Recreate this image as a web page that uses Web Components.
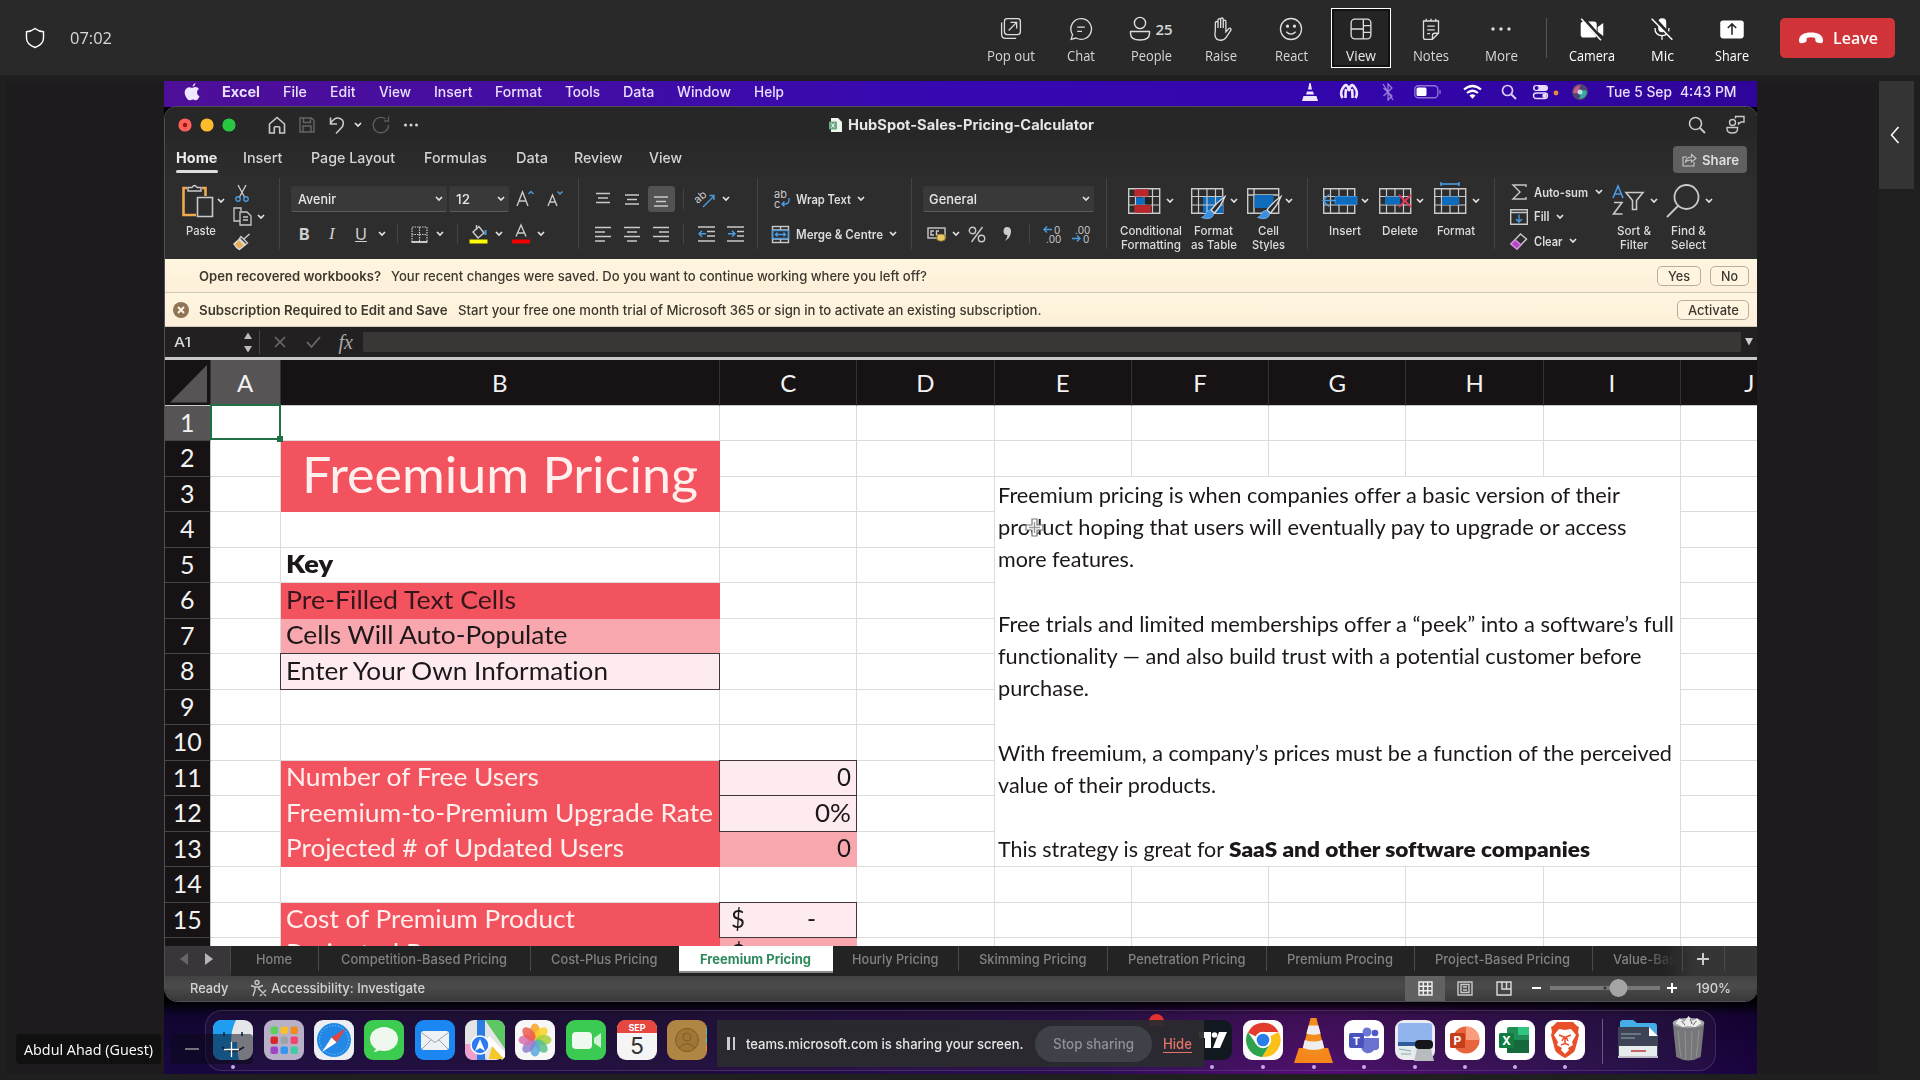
<!DOCTYPE html>
<html lang="en">
<head>
<meta charset="utf-8">
<title>Meeting</title>
<style>
html,body{margin:0;width:1920px;height:1080px;overflow:hidden;background:#1f1f1f;font-family:Inter,"Liberation Sans",sans-serif}
</style>
</head>
<body>
<meeting-app></meeting-app>
<script>
const BASE = `:host,*{box-sizing:border-box}svg{display:block;overflow:visible;flex:none}
.row{display:flex;align-items:center}.row>span{flex:none;display:flex;align-items:center}`;

function define(name, css, html) {
  customElements.define(name, class extends HTMLElement {
    constructor() { super(); this.attachShadow({ mode: 'open' }); }
    connectedCallback() {
      if (this.shadowRoot.firstChild) return;
      const t = document.createElement('template');
      t.innerHTML = `<style>${BASE}${css}</style>${typeof html === 'function' ? html(this) : html}`;
      this.shadowRoot.append(document.importNode(t.content, true));
    }
  });
}

/* Text set to an exact advance width */
customElements.define('fit-text', class extends HTMLElement {
  connectedCallback() {
    if (!this.shadowRoot) {
      this.attachShadow({ mode: 'open' }).innerHTML =
        '<style>:host{display:block;white-space:pre;flex:none}span{display:inline-block;transform-origin:0 50%}</style><span><slot></slot></span>';
    }
    const w = +this.getAttribute('w'), s = this.shadowRoot.querySelector('span');
    this.style.width = w + 'px';
    const n = s.getBoundingClientRect().width;
    if (n) s.style.transform = `scaleX(${w / n})`;
  }
});

/* Row of items [x, width, html], spaced by margins */
const row = (x0, items, style = '') => {
  let cur = x0;
  return `<div class="row" style="${style}">` + items.map(([x, w, h]) => {
    const m = x - cur; cur = x + w;
    return `<span style="margin-left:${m.toFixed(1)}px;width:${w}px">${h}</span>`;
  }).join('') + '</div>';
};
const T = (a, b, text, size, weight = 500, color = '', extra = '') =>
  [a, +(b - a).toFixed(1), `<fit-text w="${(b - a).toFixed(1)}" style="font-size:${size}px;font-weight:${weight};${color ? 'color:' + color + ';' : ''}${extra}">${text}</fit-text>`];
const svg = (w, h, body, attrs = '') => `<svg width="${w}" height="${h}" viewBox="0 0 ${w} ${h}" fill="none" stroke="#c9c9c9" stroke-width="1.4" ${attrs}>${body}</svg>`;
const I = (cx, w, h, body, attrs) => [cx - w / 2, w, svg(w, h, body, attrs)];
const CH = cx => I(cx, 8, 6, '<path d="M1 1l3 3 3-3" stroke="#e2e2e2" stroke-width="1.7"/>');
const SEP = (x, h) => [x, 1, `<i style="width:1px;height:${h}px;background:#444"></i>`];

/* ---------- Meeting header ---------- */
const hi = {
  pop: '<rect x="6" y="2" width="17" height="17" rx="3"/><path d="M3 6v12.500q0 4.500 4.500 4.500h11M10.500 14.500l8-8M12.500 6h6.500v6.500"/>',
  chat: '<path d="M13 2a11 11 0 1 1-5.200 20.600L2.500 24l1.500-5A11 11 0 0 1 13 2zM9 11h8M9 15.500h5"/>',
  raise: '<path d="M7 14V6.500q0-1.500 1.400-1.500t1.400 1.500V12V3.500Q9.800 2 11.200 2t1.400 1.500V12V3Q12.600 1.300 14 1.300T15.400 3v9V5q0-1.400 1.400-1.400T18.200 5v11l3.200-3.400q1.200-1 2.100.2.500.800-.1 1.700L18.500 22q-2 3-6 3Q7 25 6.500 19z"/>',
  react: '<circle cx="13" cy="13" r="11.200"/><path d="M8 16q5 5 10 0"/><circle cx="9.300" cy="10" r="1" fill="#ddd"/><circle cx="16.700" cy="10" r="1" fill="#ddd"/>',
  view: '<rect x="2.500" y="2.500" width="21" height="21" rx="4"/><path d="M15.500 2.500v21M2.500 13h13M15.500 9.500h8M15.500 16.500h8"/>',
  notes: '<path d="M5 4.500h16v13l-6.500 6.500H7q-2 0-2-2zM21 17.500h-4q-2.500 0-2.500 2.500v4M8 2v3M13 2v3M18 2v3M9 10h8M9 14h8M9 18h3"/>',
  more: '<g fill="#ddd" stroke="none"><circle cx="4.500" cy="13" r="1.800"/><circle cx="13" cy="13" r="1.800"/><circle cx="21.500" cy="13" r="1.800"/></g>',
  camera: '<g stroke="none" fill="#fff"><rect x="1" y="5" width="17" height="17" rx="3"/><path d="M19 11l6-4.500v14L19 16z"/></g><path d="M3 1l21 24" stroke="#292929" stroke-width="4"/><path d="M1.500 2l21 23" stroke="#fff" stroke-width="1.600"/>',
  mic: '<rect x="9" y="1.500" width="8.500" height="15" rx="4.200" fill="#fff" stroke="none"/><path d="M5.500 12q0 8 7.500 8t7.500-8M13 20v4.500" stroke="#fff"/><path d="M4 1l21 23" stroke="#292929" stroke-width="4"/><path d="M2 2l22 22.500" stroke="#fff" stroke-width="1.600"/>',
  share: '<rect x=".5" y="4" width="25" height="19" rx="3" fill="#fff" stroke="none"/><path d="M13 19V8M8.500 12L13 7.500l4.500 4.500" stroke="#292929" stroke-width="1.700"/>'
};
define('meet-button', `:host{display:flex;flex-direction:column;align-items:center;width:60px;height:60px;margin:0 5px;padding-top:7px;border:1px solid transparent;color:#d6d6d6;font-family:"Open Sans",sans-serif}
:host([active]){border-color:#fff;background:#242424;box-shadow:inset 0 0 0 2px #111;color:#e8e8e8}:host([strong]){color:#fff}
.l{height:20px;line-height:20px;margin-top:4px}.i{display:flex;align-items:center;height:26px;gap:3px}b{font-size:15px;font-weight:600}`,
  e => {
    const ic = e.getAttribute('icon');
    const g = ic === 'people'
      ? svg(23, 26, '<circle cx="11" cy="7" r="5.600"/><path d="M1.500 15.500h19v2q0 6.500-9.500 6.500T1.500 17.500z" stroke-linejoin="round"/>', 'style="stroke:#ddd"') + '<b>25</b>'
      : svg(26, 26, hi[ic], 'style="stroke:#ddd;transform:scale(.94)"');
    return `<div class="i">${g}</div><fit-text class="l" w="${e.getAttribute('w')}" style="font-size:14px">${e.getAttribute('label')}</fit-text>`;
  });
define('meet-header', `:host{display:flex;align-items:center;height:75px;background:#292929;padding:0 25px}
.time{font-family:"Open Sans",sans-serif;color:#d9d9d9;margin-left:25px;margin-right:auto}
.v{width:1px;height:40px;background:#555;margin:0 10px}
.leave{display:flex;align-items:center;gap:9px;width:115px;height:40px;background:#d13438;border-radius:5px;color:#fff;margin-left:13px;padding-left:18px;font-family:"Open Sans",sans-serif}
nav{display:flex;align-items:center;padding-top:1px}`,
  `${svg(20, 22, '<path d="M10 1.500q4 3.200 8.500 3.200V11q0 6.500-8.500 9.500Q1.500 17.500 1.500 11V4.700Q6 4.700 10 1.500z" stroke="#fff"/>')}
  <fit-text class="time" w="42" style="font-size:15.500px">07:02</fit-text>
  <nav><meet-button icon="pop" label="Pop out" w="48"></meet-button><meet-button icon="chat" label="Chat" w="28"></meet-button><meet-button icon="people" label="People" w="41"></meet-button><meet-button icon="raise" label="Raise" w="32"></meet-button><meet-button icon="react" label="React" w="33"></meet-button><meet-button icon="view" label="View" w="30" active></meet-button><meet-button icon="notes" label="Notes" w="36"></meet-button><meet-button icon="more" label="More" w="33"></meet-button>
  <i class="v"></i><meet-button icon="camera" label="Camera" w="46" strong></meet-button><meet-button icon="mic" label="Mic" w="23" strong></meet-button><meet-button icon="share" label="Share" w="34" strong></meet-button></nav>
  <div class="leave">${svg(26, 14, '<path d="M1 9.500C1 4 6 1.500 13 1.500S25 4 25 9.500q0 3-2.500 2.700l-3.500-.8q-1.500-.4-1.600-2L17.200 7Q13 5.500 8.800 7l-.2 2.400q-.1 1.600-1.600 2l-3.500.8Q1 12.500 1 9.500z" fill="#fff" stroke="none"/>')}<fit-text w="45" style="font-size:16.500px;font-weight:600">Leave</fit-text></div>`);

/* ---------- macOS menu bar ---------- */
const W = '#e9dffb', menu = (a, b, s, w = 500) => T(a, b, s, 14, w, W);
define('mac-menubar', `:host{display:block;height:26px;background:linear-gradient(90deg,#4e0f98,#430da4 25%,#3508b2 50%,#3306ab 75%,#2f0499)}`,
  row(164, [
    I(192, 16, 18, '<path d="M11.500 0q.2 2.300-2.800 3.900Q8.300 1.500 11.500 0zM8.200 5Q9.800 4 11.500 4q2.200.1 3.500 2-2.200 1.400-2 3.700.3 2.600 2.500 3.500-1.700 4-3.500 4-1 0-2-.5t-2.200 0Q4.400 18.400 2.200 14.500-.5 9.500 1.500 6.500 4 3 8.200 5z" fill="#efe6ff" stroke="none"/>'),
    menu(222, 260, 'Excel', 700), menu(283, 307, 'File'), menu(330, 355.5, 'Edit'), menu(379, 411, 'View'), menu(433.5, 472, 'Insert'), menu(495, 542, 'Format'), menu(565, 600, 'Tools'), menu(623, 654.5, 'Data'), menu(677, 731, 'Window'), menu(754, 784, 'Help'),
    I(1309.5, 18, 20, '<path d="M1 19l1.500-5h13l1.500 5zM5 12.500L6 9.500h6l1 3zM7 7.500L8.400 1h1.200L11 7.500z" fill="#eee6ff" stroke="none"/>'),
    I(1349, 20, 18, '<path d="M3.500 15Q1 10.500 3 6.500T7 2q2 .5 3 6 1-5.500 3-6 2 .5 4 4.500T16.500 15M6.500 15Q6.500 9 7 6M13.500 15Q13.500 9 13 6" stroke="#efe6ff" stroke-width="2.600"/>'),
    I(1388, 12, 18, '<path d="M1.500 5l8.500 8-4 4V1l4 4-8.500 8M1 1l10 16" stroke="#9d7fd8" stroke-width="1.200"/>'),
    I(1428, 28, 14, '<rect x=".8" y=".8" width="23" height="12" rx="3.500" stroke="#8d70d0"/><rect x="2.500" y="2.500" width="10" height="8.600" rx="1.500" fill="#fff" stroke="none"/><path d="M26 5v4" stroke="#8d70d0"/>'),
    I(1472, 19, 14, '<path d="M1 4.500q8.500-7 17 0M4 8q5.500-4.500 11 0" stroke="#fff" stroke-width="2.200"/><path d="M6.500 10.500q3-2.500 6 0l-3 3.300z" fill="#fff" stroke="none"/>'),
    I(1509, 16, 16, '<circle cx="6.500" cy="6.500" r="5" stroke="#d9cdf6" stroke-width="1.700"/><path d="M10 10l5 5" stroke="#d9cdf6" stroke-width="1.900"/>'),
    I(1540, 17, 16, '<rect x="1" y="1" width="15" height="6" rx="3" fill="#e6dcfa" stroke="none"/><circle cx="4.500" cy="4" r="2" fill="#3306ab" stroke="none"/><rect x="1.500" y="9" width="14" height="5.500" rx="2.700" stroke="#e6dcfa"/><circle cx="12.500" cy="11.700" r="2.200" fill="#e6dcfa" stroke="none"/>'),
    I(1556, 6, 6, '<circle cx="3" cy="4" r="2.400" fill="#e88b3a" stroke="none"/>'),
    I(1580, 16, 16, '<circle cx="8" cy="8" r="8" fill="#4d4470" stroke="none"/><path d="M1 9Q2 1 9 1 6 4 8 8q-3 2-7 1z" fill="#c35b8f" stroke="none"/><path d="M8 8q5-4 7 0-1 7-8 7 2-3 1-7z" fill="#38a9a5" stroke="none"/><circle cx="8" cy="8" r="2.500" fill="#bdd" stroke="none"/>'),
    T(1605.500, 1671.500, 'Tue 5 Sep', 14, 500, W), T(1680, 1736.500, '4:43 PM', 14, 500, W)
  ], 'height:21px'));

/* ---------- Excel chrome ---------- */
define('excel-titlebar', `:host{display:block;height:35px;background:#272728}`,
  row(165, [
    I(184.5, 14, 14, '<circle cx="7" cy="7" r="6.600" fill="#ff5f57" stroke="none"/><circle cx="7" cy="7" r="2.200" fill="#8c1a14" stroke="none"/>'),
    I(206.5, 14, 14, '<circle cx="7" cy="7" r="6.600" fill="#fdbc2e" stroke="none"/>'),
    I(228.700, 14, 14, '<circle cx="7" cy="7" r="6.600" fill="#28c840" stroke="none"/>'),
    I(277, 18, 18, '<path d="M1.500 8L9 1.500 16.500 8v9h-4.800v-5.500q0-.8-.8-.8H7.100q-.8 0-.8.800V17H1.500z" stroke-width="1.600"/>'),
    I(307.5, 16, 16, '<path d="M1 1h11.500L15 3.500V15H1zM4.500 1v4.500h7V1M4 15V9h8v6" stroke="#666"/>'),
    I(337.500, 16, 18, '<path d="M1.500 1.500V8H8M1.500 7.500Q6 .5 11 2.500t2.500 8L7 17.500" stroke-width="1.600"/>'), CH(358),
    I(381, 18, 18, '<path d="M16.500 9a7.700 7.700 0 1 1-3-6M16.500 .5v4.500h-4.500" stroke="#5c5c5c"/>'),
    I(411, 16, 4, '<g fill="#d5d5d5" stroke="none"><circle cx="2.500" cy="2" r="1.500"/><circle cx="8" cy="2" r="1.500"/><circle cx="13.500" cy="2" r="1.500"/></g>'),
    I(836, 14, 16, '<path d="M2 1h7l4 4v10H2z" fill="#eef5ef" stroke="none"/><rect x="0" y="4.500" width="8" height="8" rx="1" fill="#6da885" stroke="none"/><path d="M2.500 6.500l3 4M5.500 6.500l-3 4" stroke="#fff" stroke-width="1"/>'),
    T(848, 1094, 'HubSpot-Sales-Pricing-Calculator', 14, 700, '#e6e6e6'),
    I(1697.5, 18, 18, '<circle cx="7.500" cy="7.500" r="6" stroke-width="1.600"/><path d="M12 12l5 5" stroke-width="1.800"/>'),
    I(1735, 20, 19, '<circle cx="7.500" cy="7.500" r="3"/><path d="M2 12.500h10.500v1.500q0 4-5.200 4T2 14zM10.500 3.500V1.500H19V7h-3l-2.500 2V7" />')
  ], 'height:35px'));

const tab = (a, b, s, w = 500) => T(a, b, s, 14.5, w, '#d4d4d4');
define('excel-tabs', `:host{display:block;height:34px;background:linear-gradient(#29292a,#2c2c2d)}
.home{display:flex;flex-direction:column;align-items:flex-start;padding-top:6.600px;line-height:18px}.home i{width:41.500px;height:3.600px;border-radius:2px;background:#dedede;margin-top:3px}
.share{display:flex;align-items:center;gap:5px;width:74px;height:27px;background:#606061;border-radius:4px;padding-left:9px;margin-top:4px}`,
  row(165, [
    [176, 41.5, `<div class="home">${T(0, 41.5, 'Home', 14.5, 700, '#ececec')[2]}<i></i></div>`],
    tab(243, 282.5, 'Insert'), tab(311, 395, 'Page Layout'), tab(424, 487, 'Formulas'), tab(515.5, 547.5, 'Data'), tab(573.500, 622, 'Review'), tab(649, 682, 'View'),
    [1672.700, 74, `<div class="share">${svg(15, 14, '<path d="M5 4H1v9h11V9M3.500 9Q4 4.500 9.500 4V1.500L14 5.500 9.500 9V7Q5.500 6.800 3.500 9z" stroke-width="1.100"/>')}${T(0, 37, 'Share', 13.5, 600, '#dedede')[2]}</div>`]
  ], 'height:31.500px'));

const lines = (ys, xs) => ys.map((y, i) => `<path d="M${xs[i][0]} ${y}h${xs[i][1]}"/>`).join('');
const A3 = [[1, 14], [3, 10], [1, 14]];
const grid = (extra = '', fill = '') => `<path d="M.7 .7h31v24.600H.7z"/>${fill}<path d="M.7 8.500h31M.7 17h31M7.500 .7v24.600M16 .7v24.600M24.500 .7v24.600" stroke-width="1.200"/>${extra}`;
const brush = '<path d="M34 8.500Q26 14 20 22l3.500 3Q30 18 34 8.500z" fill="#2c2c2d" stroke="#ddd" stroke-width="1.300"/><path d="M19 22.500q-4 0-4.500 3.500-1 2.500-4 3.500 7 2.500 10.500-.5 2-2 1.500-4z" fill="#3b8fdf" stroke="#7ab8f0" stroke-width=".8"/>';
const big = (x0, icon, chev, labels) => `<div class="big">${row(x0, [icon, CH(chev)], 'height:46px')}${labels.map(([a, b, s]) => row(x0, [T(a, b, s, 12, 500, '#dcdcdc')], 'height:13.500px')).join('')}</div>`;
const two = (x0, a, b) => `<div>${row(x0, a, 'height:42px')}${row(x0, b, 'height:28px')}</div>`;
const field = (w, a, b, s, chev, x0) => `<div style="width:${w}px;background:#39393a;border-bottom:1px solid #5a5a5a;border-radius:2px">${row(x0, [T(a, b, s, 13.5, 500, '#e6e6e6'), CH(chev)], 'height:25px')}</div>`;

define('excel-ribbon', `:host{display:block;height:83px;padding-top:2px;background:#2d2d2e}.ribbon{align-items:flex-start!important}.ribbon>span{align-items:flex-start!important;height:74px}
b,em,u{font:400 16px/18px Inter;color:#d0d0d0}b{font-weight:700}em{font:italic 17px "Liberation Serif"}.hl{display:flex;align-items:center;justify-content:center;width:27px;height:26px;background:#525253;border-radius:3px}`,
  row(165, [
    [176, 50, big(176, I(198, 32, 34, '<path d="M5 4H1.500v27H14" stroke="#eeaa4b" stroke-width="2.600"/><path d="M20 4h3.500v8" stroke="#eeaa4b" stroke-width="2.600"/><path d="M6 7V3.500h4q2.500-4 5 0h4V7z" fill="#2d2d2e"/><path d="M15.500 13.500h15v19h-15z" fill="#2d2d2e" stroke-width="1.600"/>'), 221, [[186, 216, 'Paste']])],
    [232, 34, `<div>${row(232, [I(242, 14, 18, '<path d="M3 1l6.500 12M11 1L4.500 13"/><circle cx="3" cy="15" r="2.200" stroke="#4a9be0"/><circle cx="11" cy="15" r="2.200" stroke="#4a9be0"/>')], 'height:26px;padding-top:4px')}${row(232, [I(242, 19, 19, '<path d="M7 14H1V1h7v3M7 5h7l4 4v9H7zM10 10h5M10 13h5" stroke-width="1.300"/>'), CH(260.6)], 'height:25px')}${row(232, [I(242, 18, 17, '<path d="M16.500 1L11 6M8 3.500l6.500 6.500-2 1.500-6-6z"/><path d="M6 6.500L1 11q2 4 5.500 5.500L12 12z" fill="#e9ad58" stroke="#ddd"/>')], 'height:24px')}</div>`],
    SEP(279, 71),
    [291, 280, two(291, [
      [291, 156, field(156, 298, 336, 'Avenir', 438.500, 291)], [449, 60, field(60, 456, 470, '12', 500.500, 449)],
      I(525, 18, 20, '<path d="M1 17L6.500 3 12 17M3 12h7" /><path d="M12.500 5L15 2.500 17.500 5" stroke="#4a9be0"/>'), I(555, 16, 20, '<path d="M1 17L5.500 6 10 17M2.500 13h6"/><path d="M10.500 2.500L13 5l2.500-2.500" stroke="#4a9be0"/>')
    ], [[299, 12, '<b>B</b>'], [329, 12, '<em>I</em>'], [355, 14, '<u>U</u>'], CH(381.7), SEP(397, 20),
      I(420, 17, 17, '<path d="M1 1h15v15H1zM8.500 1v15M1 8.500h15" stroke-dasharray="1.500 1" stroke-width="1.200"/><path d="M.5 16h16" stroke="#eee" stroke-width="1.500"/>'), CH(440.500), SEP(457, 20),
      I(479, 19, 20, '<path d="M4 8l6-5.500 5 6.500-6 5zM7.500 1v5"/><path d="M16.500 6v5" stroke="#4a9be0" stroke-width="2"/><path d="M.5 17.500h18" stroke="#fffb00" stroke-width="4"/>'), CH(499),
      I(521.500, 18, 20, '<path d="M4 12.500L9 1l5 11.500M5.500 9h7"/><path d="M0 17.500h18" stroke="#f10000" stroke-width="4"/>'), CH(541)])],
    SEP(578, 71),
    [594, 150, two(594, [
      I(603, 16, 14, lines([1.5, 6, 10.5], A3)), I(632, 16, 14, lines([3, 7.5, 12], A3)), [647.5, 27, `<div class="hl">${svg(16, 14, lines([5, 9.5, 14], A3))}</div>`], SEP(683, 20),
      I(706, 19, 18, '<text x="-2" y="9" font-size="11" fill="#c9c9c9" stroke="none" transform="rotate(-40 6 8)">ab</text><path d="M6 17L17 6M12.500 5.500H17V10" stroke="#4a9be0"/>'), CH(726)
    ], [I(603, 16, 17, '<path d="M0 1.500h16M0 6h10M0 10.500h16M0 15h10"/>'), I(632, 16, 17, '<path d="M0 1.500h16M3 6h10M0 10.500h16M3 15h10"/>'), I(661, 16, 17, '<path d="M0 1.500h16M6 6h10M0 10.500h16M6 15h10"/>'), SEP(683, 20),
      I(706, 17, 16, '<path d="M0 1h17M9 5.500h8M9 10h8M0 15h17"/><path d="M8 7.700H1M4 4.700l-3 3 3 3" stroke="#4a9be0"/>'), I(735, 17, 16, '<path d="M0 1h17M10 5.500h7M10 10h7M0 15h17"/><path d="M1 7.700h7M5 4.700l3 3-3 3" stroke="#4a9be0"/>')])],
    SEP(757, 71),
    [771, 128, two(771, [I(781.5, 17, 18, '<text x="1" y="7.500" font-size="11" fill="#c9c9c9" stroke="none">ab</text><text x="1" y="17.500" font-size="11" fill="#c9c9c9" stroke="none">c</text><path d="M16 8v2q0 4-4 4H9M11.500 11.500L9 14l2.500 2.500" stroke="#4a9be0"/>'), T(796, 851, 'Wrap Text', 12.500, 600, '#dcdcdc'), CH(861)],
      [I(780, 17, 17, '<rect x=".5" y=".5" width="16" height="16"/><path d="M.5 4h16M.5 13h16M8.500 0v4M8.500 13v4"/><rect x=".5" y="4.500" width="16" height="8" stroke="#4a9be0"/><path d="M3 8.500h11M5.500 6.500l-2 2 2 2M11.500 6.500l2 2-2 2" stroke="#4a9be0"/>'), T(796, 883, 'Merge &amp; Centre', 12.500, 600, '#dcdcdc'), CH(892.6)])],
    SEP(911, 71),
    [923, 172, two(923, [[923, 170.5, field(170.5, 929, 977, 'General', 1085.500, 923)]],
      [I(936, 19, 17, '<rect x="1" y="2" width="17" height="10"/><path d="M7 5H4v4h3M12 5H9.500v4H12" /><path d="M10 9v5q4 2.500 8 0V9q-4-2-8 0z" fill="#e9c965" stroke="#8a6a20" stroke-width=".8"/>'), CH(955.500),
        I(977, 18, 17, '<circle cx="4.500" cy="4.500" r="3.200"/><circle cx="13.500" cy="12.500" r="3.200"/><path d="M14.500 1L3.500 16"/>'), I(1007, 10, 16, '<path d="M5 1q4 0 4 4.500 0 6-6 9.500 2.500-3.500 2.500-6-3.700.2-4-3.500Q1.500 1 5 1z" fill="#ccc" stroke="none"/>'), SEP(1029, 20),
        I(1052, 18, 18, '<text x="11" y="8.500" font-size="10" fill="#c9c9c9" stroke="none">0</text><text x="3" y="17.500" font-size="10" fill="#c9c9c9" stroke="none">.00</text><path d="M9 4.500H1M4 1.500l-3 3 3 3" stroke="#4a9be0"/>'),
        I(1081, 18, 18, '<text x="3" y="8.500" font-size="10" fill="#c9c9c9" stroke="none">.00</text><text x="11" y="17.500" font-size="10" fill="#c9c9c9" stroke="none">0</text><path d="M0 13.500h8M5 10.500l3 3-3 3" stroke="#4a9be0"/>')])],
    SEP(1106, 71),
    [1120, 62, big(1120, I(1144, 32, 26, grid('<path d="M6.500 1.300h14v7.200h-14zM6.500 17h16.500v7.700H6.500z" fill="#b9272d" stroke="none"/><path d="M8 9.500h9v7H8z" fill="#0f6cbd" stroke="none"/><path d="M17 9.500h6v7h-6z" fill="#222" stroke="none"/>')), 1170, [[1120, 1182, 'Conditional'], [1121, 1181, 'Formatting']])],
    [1191, 48, big(1191, I(1207, 32, 26, grid(brush, '<path d="M12 8.500h20V25H12z" fill="#0f6cbd" stroke="none"/>')), 1234, [[1194, 1233, 'Format'], [1191, 1237, 'as Table']])],
    [1247, 48, big(1247, I(1263, 32, 26, '<path d="M.7 .7h31v24.600H.7zM7 .7v24.600M.7 7h31"/><path d="M7.500 7h19v13H7.500z" fill="#0f6cbd" stroke="none"/>' + brush), 1289, [[1258, 1279, 'Cell'], [1252, 1285, 'Styles']])],
    SEP(1307, 71),
    [1322, 50, big(1322, I(1339, 32, 26, grid('<path d="M12 8.500h22v8H12z" fill="#0f6cbd" stroke="#2e8ee6" stroke-width=".8"/><path d="M13 12.500H0M6 6.500l-6 6 6 6" stroke="#4ba3ee"/>')), 1365, [[1329, 1361, 'Insert']])],
    [1378, 48, big(1378, I(1395, 32, 26, grid('<path d="M6 8.500h15v8H6z" fill="#0f6cbd" stroke="none"/><path d="M20 7l12 12M32 7L20 19" stroke="#e0365a" stroke-width="1.800"/>')), 1420, [[1382, 1418, 'Delete']])],
    [1434, 48, big(1434, I(1450, 32, 26, grid('<path d="M8 8.500h17v8.500H8z" fill="#0f6cbd" stroke="none"/><path d="M7-4h18M7-6v4M25-6v4" stroke="#4ba3ee"/>')), 1476, [[1437, 1475, 'Format']])],
    SEP(1494, 71),
    [1509, 96, `<div style="padding-top:2px">${row(1509, [I(1519, 15, 16, '<path d="M14 3V1H1l7 7-7 7h13v-2"/>'), T(1534, 1588, 'Auto-sum', 12.5, 600, '#dcdcdc'), CH(1599)], 'height:24.500px')}${row(1509, [I(1518.500, 18, 16, '<path d="M.7 .7h16.600v14.600H.7zM.7 3.500h16.600"/><path d="M9 5.500V13M6 10l3 3 3-3" stroke="#4a9be0"/>'), T(1534, 1549.500, 'Fill', 12.5, 600, '#dcdcdc'), CH(1560)], 'height:24.500px')}${row(1509, [I(1518, 17, 17, '<path d="M1 11L10.500 1l6 5L7 16z"/><path d="M1 11l4-4.300 6 5L7 16z" fill="#b146c2" stroke="#d58be0"/>'), T(1534, 1562.5, 'Clear', 12.5, 600, '#dcdcdc'), CH(1573)], 'height:24.500px')}</div>`],
    [1612, 48, big(1612, I(1628, 32, 32, '<path d="M1 13L6 1l5 12M2.500 9h7" stroke="#4a9be0" stroke-width="1.600"/><path d="M2 17.500h8L1.500 29h9" stroke-width="1.600"/><path d="M14 7.500h17l-6.500 8v9h-4v-9z" stroke-width="1.600"/>'), 1654, [[1617, 1651, 'Sort &amp;'], [1620, 1648, 'Filter']])],
    [1666, 48, big(1666, I(1683, 34, 34, '<circle cx="20.500" cy="13" r="12" stroke-width="1.800"/><path d="M12 22L1 33" stroke-width="1.800"/>'), 1709, [[1671, 1706, 'Find &amp;'], [1671, 1706, 'Select']])]
  ], '').replace('class="row"', 'class="row ribbon"'));

define('notice-bar', `:host{display:block;background:linear-gradient(#fff6df,#fdefd9);box-shadow:inset 0 -1px #cfc6b5}
.b{display:flex;align-items:center;justify-content:center;height:20px;width:100%;border:1px solid #b9ae9b;border-radius:5px;background:#fff4e0}`,
  e => {
    const D = '#3d382f', btn = (a, b, ta, tb, s) => [a, b - a, `<div class="b">${T(ta, tb, s, 13, 500, D)[2]}</div>`];
    return e.hasAttribute('recovered')
      ? row(165, [T(199, 381, 'Open recovered workbooks?', 13, 600, D), T(391, 927, 'Your recent changes were saved. Do you want to continue working where you left off?', 13, 500, D), btn(1657, 1701, 1668, 1690, 'Yes'), btn(1710, 1749, 1721, 1738, 'No')], 'height:34px')
      : row(165, [I(181, 16, 16, '<circle cx="8" cy="8" r="8" fill="#8f7556" stroke="none"/><path d="M5 5l6 6M11 5l-6 6" stroke="#fff3e0" stroke-width="2"/>'), T(199, 447.5, 'Subscription Required to Edit and Save', 13, 600, D), T(457.5, 1041, 'Start your free one month trial of Microsoft 365 or sign in to activate an existing subscription.', 13, 500, D), btn(1677, 1749, 1687, 1738, 'Activate')], 'height:34px');
  });

define('formula-bar', `:host{display:block;height:33px;background:#232021;border-bottom:3px solid #c9c9c9}em{font:italic 20px "Liberation Serif";color:#aaa}.f{height:20px;width:1378px;background:#3a3635;border-radius:2px}`,
  row(165, [T(174, 191, 'A1', 13, 500, '#d8d8d8'), I(248, 10, 21, '<path d="M1 7l4-6.500L9 7zM1 14l4 6.500L9 14z" fill="#bdbdbd" stroke="none"/>'), SEP(259, 24),
    I(280, 12, 12, '<path d="M1 1l10 10M11 1L1 11" stroke="#6a6a6a" stroke-width="1.700"/>'), I(313, 15, 12, '<path d="M1 6l4.500 5L14 1" stroke="#6a6a6a" stroke-width="1.800"/>'), [338.5, 18, '<em>fx</em>'], [363, 1378, '<div class="f"></div>'],
    I(1749, 8, 8, '<path d="M0 0h8L4 7.500z" fill="#ccc" stroke="none"/>')], 'height:30px'));

/* ---------- Worksheet ---------- */
const COLS = [45.5, 70, 439.5, 137.3, 137.3, 137.3, 137.3, 137.3, 137.3, 137.3, 137.3];
const cell = (c, r, cls, html, cs = 1, rs = 1) => `<div class="c ${cls}" style="grid-column:${c}/span ${cs};grid-row:${r}/span ${rs}">${html}</div>`;
const ft = (w, s, size = 24.5, wt = 400) => `<fit-text w="${w}" style="font-size:${size}px;font-weight:${wt}">${s}</fit-text>`;
define('sheet-grid', `:host{display:block;height:586px;overflow:hidden;background:#fff;font-family:Lato,sans-serif;color:#1c1718;font-variant-ligatures:none}
.g{display:grid;grid-template-columns:${COLS.map(c => c + 'px').join(' ')};grid-template-rows:45.500px repeat(17,35.500px)}
.c{border-right:1px solid #dcdcdc;border-bottom:1px solid #dcdcdc;display:flex;align-items:center;padding:0 0 2px 5px;overflow:hidden;white-space:nowrap;min-width:0}
.h{background:#171314;color:#f2f2f2;justify-content:center;padding:0;border-right:1px solid #373334;border-bottom:1px solid #c9c9c9;font-size:24px}
.n{background:#171314;color:#f2f2f2;justify-content:center;padding:0 0 2px;border-bottom:1px solid #484446;border-right:1px solid #c9c9c9;font-size:25px}
.s{background:#565455}.r{background:#f2535e;color:#fff0ee;border-color:#f2535e}.k{color:#34161b}.p{background:#f9a7ae;border-color:#f9a7ae}.e{background:#fdebf0;border:1px solid #423539;margin:-1px 0 0 -1px;z-index:1}
.v{justify-content:flex-end;padding-right:5px}.t{justify-content:center;padding:0 0 6px}.m{background:#fff;flex-direction:column;align-items:flex-start;padding:2.500px 0 0 3px;font-size:21px;border-left:0}
.m>*{height:32.200px;line-height:32.200px}.m>div{display:flex;gap:5px}.sel{position:relative;overflow:visible;border-color:transparent}.sel:before{content:"";position:absolute;inset:-2px -1px 0 -1px;border:2px solid #1f7145}.sel:after{content:"";position:absolute;right:-3px;bottom:-2px;width:6px;height:6px;background:#1f7145}
.corner{padding:0;align-items:flex-end;justify-content:flex-end}.dol{padding-left:11px}.low{padding-bottom:5px}`,
  () => {
    let h = cell(1, 1, 'h corner', svg(46, 45, '<path d="M6 42.500H43V5z" fill="#565455" stroke="none"/>'));
    'ABCDEFGHIJ'.split('').forEach((l, i) => h += cell(i + 2, 1, 'h' + (i ? '' : ' s'), l));
    for (let r = 1; r <= 16; r++) {
      h += cell(1, r + 1, 'n' + (r === 1 ? ' s' : ''), r < 16 ? r : '');
      for (let c = 0; c < 10; c++) {
        if (c === 1 && [2, 3, 5, 6, 7, 8, 11, 12, 13, 15, 16].includes(r)) continue;
        if (c === 2 && [11, 12, 13, 15, 16].includes(r)) continue;
        if (c >= 4 && c <= 8 && r >= 3 && r <= 13) continue;
        h += cell(c + 2, r + 1, c === 0 && r === 1 ? 'sel' : '', '');
      }
    }
    const B = (r, cls, w, s, wt) => cell(3, r + 1, cls, ft(w, s, 24.5, wt));
    h += cell(3, 3, 'r t', ft(396, 'Freemium Pricing', 50.5), 1, 2);
    h += B(5, '', 47, 'Key', 800) + B(6, 'r k', 230, 'Pre-Filled Text Cells') + B(7, 'p', 281.5, 'Cells Will Auto-Populate') + B(8, 'e', 322, 'Enter Your Own Information');
    h += B(11, 'r', 253, 'Number of Free Users') + B(12, 'r', 427, 'Freemium-to-Premium Upgrade Rate') + B(13, 'r', 338, 'Projected # of Updated Users') + B(15, 'r', 289, 'Cost of Premium Product') + B(16, 'r low', 222, 'Projected Revenue');
    h += cell(4, 12, 'e v', ft(14, '0')) + cell(4, 13, 'e v', ft(36, '0%')) + cell(4, 14, 'p v', ft(14, '0'));
    h += cell(4, 16, 'e dol', ft(14, '$') + `<span style="margin-left:62px">${ft(9, '-')}</span>`) + cell(4, 17, 'p low dol', ft(14, '$'));
    h += cell(6, 4, 'm', [
      [622, 'Freemium pricing is when companies offer a basic version of their'], [628.5, 'product hoping that users will eventually pay to upgrade or access'], [136, 'more features.'], 0,
      [676, 'Free trials and limited memberships offer a “peek” into a software’s full'], [643.500, 'functionality — and also build trust with a potential customer before'], [91, 'purchase.'], 0,
      [674, 'With freemium, a company’s prices must be a function of the perceived'], [218, 'value of their products.'], 0
    ].map(l => l ? ft(l[0], l[1], 21) : '<i></i>').join('') + `<div>${ft(226, 'This strategy is great for', 21)}${ft(361, 'SaaS and other software companies', 21, 800)}</div>`, 5, 11);
    return `<div class="g">${h}</div>`;
  });

/* ---------- Sheet tabs and status bar ---------- */
define('sheet-tabs', `:host{display:block;height:30px;background:linear-gradient(90deg,#383638 66px,#232324 66px 1500px,#353536 1530px);overflow:hidden}.row>span{height:25px}.a{width:153.500px;height:25px;background:#fff;display:flex;align-items:center;justify-content:center;box-shadow:0 2px #8a8a8a}.fade{-webkit-mask-image:linear-gradient(90deg,#000 50%,transparent)}`,
  () => {
    const t = (a, b, s) => T(a, b, s, 13, 500, '#828282'), S = x => [x, 1, '<i style="width:1px;height:25px;background:#4a4a4a"></i>'];
    const v = t(1613, 1676, 'Value-Bas'); v[2] = `<div class="fade">${v[2]}</div>`;
    return row(165, [I(184, 8, 12, '<path d="M8 0v12L0 6z" fill="#666" stroke="none"/>'), I(209, 8, 12, '<path d="M0 0v12l8-6z" fill="#b5b5b5" stroke="none"/>'), S(230),
      t(256, 292, 'Home'), S(318), t(341, 507, 'Competition-Based Pricing'), S(530), t(551, 657.5, 'Cost-Plus Pricing'),
      [679, 153.5, `<div class="a">${T(0, 111, 'Freemium Pricing', 13, 700, '#2d8a5c')[2]}</div>`],
      t(852, 938.500, 'Hourly Pricing'), S(958), t(979, 1086.5, 'Skimming Pricing'), S(1107), t(1128, 1245.5, 'Penetration Pricing'), S(1266), t(1287, 1393, 'Premium Procing'), S(1414), t(1435, 1570, 'Project-Based Pricing'), S(1592), v, S(1682),
      I(1703, 12, 12, '<path d="M6 0v12M0 6h12" stroke="#ccc" stroke-width="2"/>'), S(1724)], 'height:27px;align-items:flex-start;padding-top:0');
  });
define('status-bar', `:host{display:block;height:25px;background:linear-gradient(#424243,#4b4b4c 40%,#39393a)}.on{display:flex;align-items:center;justify-content:center;width:40px;height:25px;background:#616162}`,
  row(165, [T(190, 228.5, 'Ready', 13, 500, '#d3d3d3'), I(258.500, 17, 17, '<circle cx="7" cy="2.500" r="2"/><path d="M1 5.500l4 1.500v3l-2 6M13 5.500L9 7v3M5 7h4M9 9l7 7M16 10l-6 6"/>'), T(271, 425, 'Accessibility: Investigate', 13, 500, '#d3d3d3'),
    [1405, 40, `<div class="on">${svg(15, 15, '<path d="M1 1h13v13H1zM5.300 1v13M9.700 1v13M1 5.300h13M1 9.700h13" stroke="#eee"/>')}</div>`],
    I(1464.5, 16, 15, '<path d="M1 1h14v13H1z"/><path d="M4 3.500h8v8H4zM6 6h4M6 9h4" />'), I(1504, 16, 15, '<path d="M1 1h14v13H1zM6 1v7h9M10.500 1v7" stroke="#ddd"/>'),
    I(1537, 10, 10, '<path d="M0 5h9" stroke="#fff" stroke-width="2"/>'),
    [1550, 110, svg(110, 20, '<path d="M0 10h110" stroke="#777" stroke-width="4"/><circle cx="55" cy="10" r="1.500" fill="#333" stroke="none"/><circle cx="68.500" cy="10" r="9" fill="#a5a5a5" stroke="none"/>')],
    I(1672, 10, 10, '<path d="M0 5h10M5 0v10" stroke="#fff" stroke-width="2"/>'), T(1695.500, 1730.500, '190%', 13, 500, '#d3d3d3')], 'height:24px'));

define('excel-window', `:host{display:block;border-radius:12px 12px 13px 13px;overflow:hidden;box-shadow:0 0 0 1px #514d5a;margin:0 0 0 1px}`,
  `<excel-titlebar></excel-titlebar><excel-tabs></excel-tabs><excel-ribbon></excel-ribbon><notice-bar recovered></notice-bar><notice-bar></notice-bar><formula-bar></formula-bar><sheet-grid></sheet-grid><sheet-tabs></sheet-tabs><status-bar></status-bar>`);

/* ---------- Dock ---------- */
const sq = f => `<rect width="40" height="40" rx="9" fill="${f}"/>`;
const petals = ['#f5a623', '#f9d423', '#a7cf3a', '#5cc08a', '#5aa8dd', '#8f7fce', '#d96fae', '#ef5a4f'].map((c, i) => `<ellipse cx="20" cy="11.500" rx="5" ry="8" fill="${c}" opacity=".85" transform="rotate(${i * 45} 20 20)"/>`).join('');
const APPS = {
  finder: sq('#e4e6ea') + '<path d="M9 0h14q-5 10-5 22h6q0 10 2 18H9q-9 0-9-9V9Q0 0 9 0z" fill="#1f9df0"/><path d="M11 12v4M29 12v4M9 27q11 8 22 0" stroke="#15354f" stroke-width="1.700" fill="none"/>',
  pad: sq('#b7b0c6') + ['#5bd05b', '#f6c12d', '#f08c1f', '#d8282e', '#9ea3a8', '#f14670', '#9f44c9', '#3894f2', '#41cba1'].map((c, i) => `<rect x="${6.500 + (i % 3) * 10}" y="${6.500 + (i / 3 | 0) * 10}" width="7.500" height="7.500" rx="2" fill="${c}"/>`).join(''),
  safari: sq('#eceff2') + '<circle cx="20" cy="20" r="17" fill="#2288e6"/><circle cx="20" cy="20" r="14.500" fill="none" stroke="#9cd0f8" stroke-dasharray="1 2"/><path d="M32 8L22.500 22.500 17.500 17.500z" fill="#e8423a"/><path d="M8 32l9.500-14.500 5 5z" fill="#fff"/>',
  msg: sq('#3ccd50') + '<ellipse cx="20" cy="19" rx="14" ry="12" fill="#eef8ee"/><path d="M12 27q0 4-3 5 5 0 8-3z" fill="#eef8ee"/>',
  mail: sq('#1c86f2') + '<rect x="6" y="11" width="28" height="19" rx="3" fill="#eef2f5"/><path d="M7 13l13 9.500L33 13M7 29l9-9M33 29l-9-9" stroke="#9aa3ac" fill="none"/>',
  maps: sq('#e5e5e5') + '<path d="M20 0h11q9 0 9 9v20z" fill="#5cc763"/><path d="M0 24h10l12 16H9q-9 0-9-9z" fill="#eda0cf"/><path d="M24 16l16 16v5l-3 3-16-17z" fill="#fff"/><path d="M27 26l12 13H24z" fill="#f5c727"/><path d="M12 0h8v40h-8z" fill="#2b7be4"/><circle cx="15" cy="25" r="9" fill="#2a7cf0" stroke="#fff" stroke-width="1.500"/><path d="M15 19l5 12-5-3-5 3z" fill="#fff"/>',
  photos: sq('#f7f7f7') + petals,
  ft: sq('#3bcb53') + '<rect x="6" y="12" width="20" height="17" rx="4" fill="#f0f9f0"/><path d="M28 18l7-5v15l-7-5z" fill="#d5efd6"/>',
  cal: sq('#f5f5f5') + '<path d="M9 0h22q9 0 9 9v4H0V9Q0 0 9 0z" fill="#e6473f"/><text x="20" y="10.500" font-size="9" font-weight="700" text-anchor="middle" fill="#fff">SEP</text><text x="20" y="34" font-size="23" text-anchor="middle" fill="#333">5</text>',
  contacts: sq('#b08645') + '<circle cx="20" cy="20" r="11.500" fill="#a07634" stroke="#7f5c28"/><circle cx="20" cy="17" r="4" fill="none" stroke="#7f5c28"/><path d="M12 28q8-9 16 0" fill="none" stroke="#7f5c28"/><path d="M39.500 8v6M39.500 17v6" stroke="#4cb" /><path d="M39.500 25v6" stroke="#f83"/>',
  tv: sq('#111820') + '<path d="M7 12h12v16h-6V18H7zM27 12h8l-7 16h-7z" fill="#fff"/><circle cx="22.500" cy="15" r="2.800" fill="#fff"/>',
  chrome: sq('#fafafa') + '<path d="M20 20L5 12.500A17 17 0 0 1 35.500 12H20z" fill="#e33b2e"/><path d="M20 20l15.500-8A17 17 0 0 1 19 37l8-13z" fill="#fbc116"/><path d="M20 20l7 4-8 13A17 17 0 0 1 5 12l8 12z" fill="#2da24c"/><circle cx="20" cy="20" r="8.200" fill="#fff"/><circle cx="20" cy="20" r="6.300" fill="#2b7de9"/>',
  vlc: '<path d="M5 28h30l5 15H0z" fill="#f6851b"/><path d="M17-2h6l9 35q-12 4-24 0z" fill="#f28c1e"/><path d="M15 5.500h10l2.300 8q-7.300 2.500-14.600 0zM11 20q9 3 18 0l2 8q-11 4-22 0z" fill="#eee"/>',
  teams: sq('#fff') + '<circle cx="23" cy="12" r="4.500" fill="#6d78d6"/><circle cx="31" cy="13" r="3.300" fill="#5059c9"/><path d="M17 18h18v10q-2 3-5 2-3 4-8 3-5-2-5-7z" fill="#6a74d0"/><rect x="5" y="13" width="15" height="15" rx="2" fill="#4a52bd"/><text x="12.500" y="24.500" font-size="11" font-weight="700" text-anchor="middle" fill="#fff">T</text>',
  preview: sq('#ecebf0') + '<path d="M3 6q0-3 3-3h28q3 0 3 3v17H3z" fill="#92b4ee"/><path d="M3 22h34v4H3z" fill="#2d5b9c"/><path d="M3 26h34v10H3z" fill="#e6ebee"/><path d="M4 29l12 2M6 34h10" stroke="#8aa"/><rect x="20" y="20" width="18" height="9" rx="4" fill="#15161b"/><path d="M22 29h14l3 12H19z" fill="#b9bcbf"/>',
  ppt: sq('#fff') + '<circle cx="21" cy="20" r="13.500" fill="#e8643d"/><path d="M21 6.500A13.500 13.500 0 0 1 34.500 20H21z" fill="#fb9c7c"/><rect x="5" y="13" width="15" height="15" rx="1.500" fill="#c43e1c"/><text x="12.500" y="25" font-size="12" font-weight="700" text-anchor="middle" fill="#fff">P</text>',
  xls: sq('#fff') + '<rect x="12" y="7" width="22" height="26" rx="2" fill="#1f8f55"/><path d="M23 7h11v8H23z" fill="#33c481"/><path d="M12 20h22v13H12z" fill="#15693c"/><rect x="4" y="13" width="15" height="15" rx="1.500" fill="#107c41"/><text x="11.500" y="25" font-size="12" font-weight="700" text-anchor="middle" fill="#fff">X</text>',
  brave: sq('#fff') + '<path d="M12 2h16l4 4 2 1-1 5 1 3-4 15q-1 3-10 8-9-5-10-8L6 15l1-3-1-5 2-1z" fill="#e8502b"/><path d="M14 9l6 1 6-1 5 6-4 7 1 3-5 3 1 2-4 4-4-4 1-2-5-3 1-3-4-7z" fill="#fff"/><path d="M14 15l5 2-2 4M26 15l-5 2 2 4M16 25l4-1.500 4 1.500M20 17v6" stroke="#e8502b" stroke-width="1.600" fill="none"/>',
  folder: '<path d="M2 3q0-3 3-3h10l4 3h17q3 0 3 3v10H2z" fill="#43aee8"/><path d="M0 7h31l9 9v21H0z" fill="#3c4456"/><path d="M31 7l9 9h-9z" fill="#fff"/><path d="M1 26h38v10H1z" fill="#e7ecec"/><path d="M3 14h20M3 18h14" stroke="#9aa"/><path d="M13 31h15" stroke="#c66" stroke-width="2"/><path d="M0 37h40" stroke="#eee" stroke-width="1.500"/>',
  trash: '<path d="M2 3h36l-4 34q-14 7-28 0z" fill="#77777b"/><path d="M8 10l3 27M16 11l1 29M24 11l-1 29M32 10l-3 27" stroke="#929297"/><ellipse cx="20" cy="3" rx="18" ry="5" fill="#a5a6a8"/><path d="M5 3l5-5 5 4 5-6 5 5 5-3 5 5-7 4-9-1-6 1z" fill="#ececec"/><path d="M12 1l4 4M22-1l2 5M29 1l-4 4" stroke="#555"/>'
};
define('app-icon', `:host{display:flex;flex-direction:column;align-items:center;padding-top:8.500px;height:60px}i{width:4px;height:4px;border-radius:50%;background:#c9a6ee;margin-top:5.500px}text{font-family:Inter}`,
  e => { const w = +(e.getAttribute('w') || 40); return `<svg width="${w}" height="40" viewBox="0 0 40 40" preserveAspectRatio="none">${APPS[e.getAttribute('name')]}</svg>${e.hasAttribute('run') ? '<i></i>' : ''}`; });
define('share-toast', `:host{display:block;width:487px;height:47px;background:rgba(43,43,47,.94);color:#e5e5e5}.b{display:flex;align-items:center;justify-content:center;width:117px;height:36px;border-radius:18px;background:#3e4248}
.g{display:flex;gap:3px}.g i{width:2.500px;height:13px;background:#ccc}u{text-underline-offset:3px}`,
  row(717, [[727, 10, '<div class="g"><i></i><i></i></div>'], T(745.5, 1023, 'teams.microsoft.com is sharing your screen.', 14, 500), [1034.500, 117, `<div class="b">${T(0, 81, 'Stop sharing', 14, 500, '#8e9196')[2]}</div>`], T(1163, 1192, '<u>Hide</u>', 14, 500, '#e57368')], 'height:47px'));
define('mac-dock', `:host{display:block;margin:9px 0 0 41px;width:1511px;height:61px;border:1px solid rgba(150,110,190,.28);border-radius:17px;background:rgba(60,35,80,.25)}.d>span{height:59px;align-items:flex-start!important}
.line{width:1px;height:45px;background:#6d5680;margin-top:8px}share-toast{position:absolute;left:553px;top:939px}.badge{position:absolute;left:985px;top:933px;width:15px;height:12px;border-radius:8px 8px 0 0;background:#e5322d}`,
  () => {
    const a = (x, n, run, w = 40) => [x, w, `<app-icon name="${n}" w="${w}" ${run ? 'run' : ''}></app-icon>`];
    return row(206, [a(213, 'finder', 1), a(263.5, 'pad'), a(314, 'safari'), a(364, 'msg'), a(415, 'mail'), a(465, 'maps'), a(515, 'photos'), a(565.5, 'ft'), a(616.5, 'cal'), a(667, 'contacts'),
      a(1192, 'tv', 1), a(1243, 'chrome', 1), a(1294, 'vlc', 1, 39), a(1343.5, 'teams', 1), a(1394.5, 'preview', 1), a(1444.5, 'ppt', 1), a(1495, 'xls', 1), a(1545, 'brave', 1), [1602, 1, '<i class="line"></i>'], a(1617.5, 'folder'), a(1671, 'trash', 0, 35)], '').replace('class="row"', 'class="row d"') + '<i class="badge"></i><share-toast></share-toast>';
  });

define('shared-screen', `:host{display:block;position:relative;width:1593px;height:993px;overflow:hidden;background:linear-gradient(rgba(0,0,0,1) 920px,rgba(0,0,0,.25) 935px,transparent 990px),linear-gradient(90deg,#170740,#1c0c3a 30%,#2a0d52 58%,#560a76 72%,#420c62 80%,#230c48 92%,#19033f)}
.cursor{position:absolute;left:861px;top:437px}`,
  `<mac-menubar></mac-menubar><excel-window></excel-window><mac-dock></mac-dock>${svg(19, 19, '<path d="M7 1h5v6h6v5h-6v6H7v-6H1V7h6z" fill="#fff" stroke="#777" stroke-width="1.200"/><path d="M9.500 4v11M4 9.500h11" stroke="#999"/>', 'class="cursor"')}`);

define('guest-badge', `:host{position:absolute;left:16px;top:1034px;display:flex;align-items:center;height:30px;width:145px;padding-left:8px;border-radius:4px;background:#101010;color:#fff;font-family:"Open Sans",sans-serif}`,
  `<fit-text w="129" style="font-size:14.500px"><slot></slot></fit-text>`);
define('zoom-control', `:host{position:absolute;left:171px;top:1034px;display:flex;align-items:center;height:30px;width:82px;padding-left:14px;gap:25px;border-radius:4px;background:rgba(10,8,20,.5)}`,
  svg(14, 14, '<path d="M0 7h14" stroke="#aaa" stroke-width="1.300"/>') + svg(15, 15, '<path d="M0 7.500h15M7.500 0v15" stroke="#fff" stroke-width="1.300"/>'));
define('side-toggle', `:host{display:flex;align-items:center;justify-content:center;width:35px;height:108px;padding-right:3px;background:#343434}`, svg(10, 18, '<path d="M8.500 1L1.500 9l7 8" stroke="#fff" stroke-width="1.500"/>'));
define('meeting-app', `:host{display:flex;flex-direction:column;width:1920px;height:1080px;background:#1f1f1f}main{display:flex;margin:6px 0 0 6px;height:993px}.p{background:#1e1b1e;height:993px}`,
  `<meet-header></meet-header><main><div class="p" style="width:158px"></div><shared-screen></shared-screen><div class="p" style="width:122px"></div><side-toggle></side-toggle></main><guest-badge>Abdul Ahad (Guest)</guest-badge><zoom-control></zoom-control>`);
</script>
</body>
</html>
